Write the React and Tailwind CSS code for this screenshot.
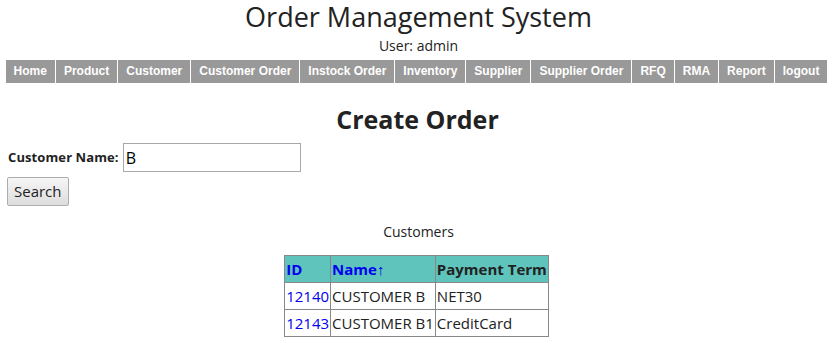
export default function App() {
  const nav = ["Home","Product","Customer","Customer Order","Instock Order","Inventory","Supplier","Supplier Order","RFQ","RMA","Report","logout"];
  return (
    <div className="bg-white text-[#222] w-[837px] h-[349px] overflow-hidden font-['Open_Sans',sans-serif]">
      <div className="pt-[1px] pb-[1px] text-center text-[27px] leading-[32px] text-[#222]">Order Management System</div>
      <div className="text-center text-[14px] leading-[20px] mt-[2px] text-[#222]">User: admin</div>
      <div className="flex justify-center mt-[4px] pl-[1px] pr-[5px]">
        <div className="flex bg-[#999] font-['Liberation_Sans',Arial,sans-serif] font-bold text-[12px] text-white">
          {nav.map((n, i) => (
            <div key={n} className={"px-[8px] h-[23px] leading-[23px] " + (i < nav.length - 1 ? "border-r border-white" : "")}>{n}</div>
          ))}
        </div>
      </div>
      <div className="text-center font-bold text-[25px] leading-[36px] mt-[18px] pr-[2px]">Create Order</div>
      <div className="flex items-center mt-[6px] pl-[8px]">
        <span className="font-bold text-[13px] tracking-[0.1px]">Customer Name:</span>
        <input readOnly value="B" className="ml-[4px] w-[178px] h-[29px] border border-[#a9a9a9] px-[2px] text-[16px] text-black outline-none" />
      </div>
      <div className="pl-[7px] mt-[5px]">
        <button className="h-[29px] px-[6px] border border-[#adadad] rounded-[2px] bg-gradient-to-b from-[#f6f6f6] to-[#dddddd] text-[15px] text-[#222]">Search</button>
      </div>
      <div className="text-center text-[14px] leading-[20px] mt-[16px]">Customers</div>
      <div className="flex justify-center mt-[13px] pr-[4px]">
        <table className="border-collapse text-[15px]">
          <thead>
            <tr className="bg-[#5fc4bc] h-[27px]">
              <th className="border border-[#888] text-left px-[1px] font-bold text-[#0000ee]">ID</th>
              <th className="border border-[#888] text-left px-[1px] font-bold text-[#0000ee]">Name↑</th>
              <th className="border border-[#888] text-left px-[1px] font-bold text-[#222]">Payment Term</th>
            </tr>
          </thead>
          <tbody>
            <tr className="h-[27px]">
              <td className="border border-[#888] px-[1px] text-[#0000ee]">12140</td>
              <td className="border border-[#888] px-[1px]">CUSTOMER B</td>
              <td className="border border-[#888] px-[1px]">NET30</td>
            </tr>
            <tr className="h-[27px]">
              <td className="border border-[#888] px-[1px] text-[#0000ee]">12143</td>
              <td className="border border-[#888] px-[1px]">CUSTOMER B1</td>
              <td className="border border-[#888] px-[1px]">CreditCard</td>
            </tr>
          </tbody>
        </table>
      </div>
    </div>
  );
}
